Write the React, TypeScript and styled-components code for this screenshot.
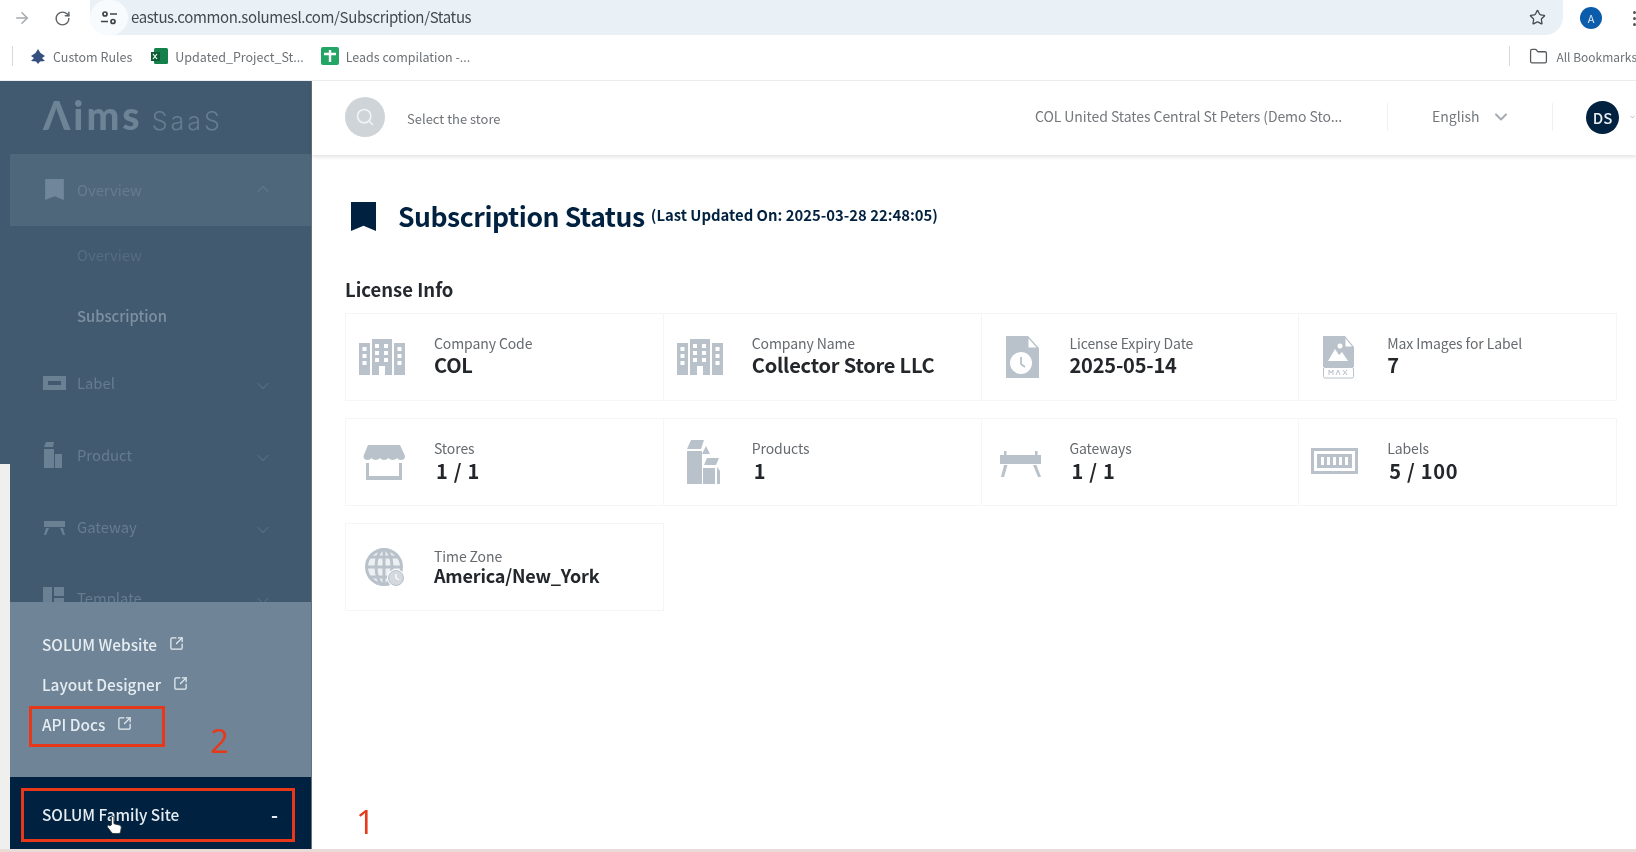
import React from "react";
import styled, { createGlobalStyle } from "styled-components";
import {
  ArrowRight,
  ChevronDown,
  ChevronUp,
  Folder,
  RotateCw,
  Search,
  SquareArrowOutUpRight,
  Star,
} from "lucide-react";

const FONT = `"Noto Sans CJK KR", "Noto Sans", sans-serif`;
const ICON = "#b9c2ca";

const Global = createGlobalStyle`
  html, body { margin: 0; padding: 0; background: #fff; overflow: hidden; }
  * { box-sizing: border-box; }
  #root { width: 1636px; height: 852px; }
`;

const Page = styled.div`
  width: 1636px;
  height: 852px;
  display: flex;
  flex-direction: column;
  overflow: hidden;
  font-family: ${FONT};
  background: #fff;
  border-bottom: 3px solid #e9dcd8;
  filter: blur(0.35px);
`;

const ChromeBar = styled.div`
  height: 36px;
  flex: none;
  display: flex;
  align-items: center;
  color: #6b7177;
`;

const NavButtons = styled.div`
  width: 90px;
  flex: none;
  display: flex;
  align-items: center;
  gap: 23px;
  padding-left: 13px;
`;

const Omnibox = styled.div`
  width: 1473px;
  height: 35px;
  flex: none;
  align-self: flex-start;
  display: flex;
  align-items: center;
  background: #e9f1f7;
  border-radius: 0 0 18px 18px;
  padding-right: 17px;
`;

const SiteChip = styled.div`
  width: 38px;
  height: 35px;
  flex: none;
  display: flex;
  align-items: center;
  justify-content: center;
  background: #f8fbfd;
  border-radius: 18px;
  margin-right: 3px;
`;

const UrlText = styled.span`
  flex: 1;
  font-size: 15px;
  letter-spacing: -0.37px;
  color: #44494e;
  padding-bottom: 2px;
`;

const ProfileDot = styled.div`
  width: 22px;
  height: 22px;
  margin-left: 17px;
  border-radius: 50%;
  background: #0b5cab;
  color: #dfeaf5;
  font-size: 11px;
  display: flex;
  align-items: center;
  justify-content: center;
  flex: none;
`;

const KebabDots = styled.div`
  margin-left: 31px;
  display: flex;
  flex-direction: column;
  gap: 3px;
  flex: none;
  span {
    width: 3px;
    height: 3px;
    border-radius: 50%;
    background: #555;
  }
`;

const BookmarkBar = styled.div`
  height: 45px;
  flex: none;
  display: flex;
  align-items: center;
  padding: 0 0 4px 12px;
  border-bottom: 1px solid #eceef0;
  font-size: 12.5px;
  color: #6d7277;
`;

const BarDivider = styled.div`
  width: 1px;
  height: 20px;
  background: #d5d9dc;
  flex: none;
`;

const BookmarkItem = styled.div<{ $left: number; $gap: number; $right?: number; $size?: number }>`
  display: flex;
  align-items: center;
  gap: ${(p) => p.$gap}px;
  margin-left: ${(p) => p.$left}px;
  margin-right: ${(p) => p.$right ?? 0}px;
  font-size: ${(p) => p.$size ?? 12.5}px;
  white-space: nowrap;
  flex: none;
`;

const BookmarkSpacer = styled.div`
  flex: 1;
`;

const Body = styled.div`
  flex: 1;
  display: flex;
  min-height: 0;
`;

const Sidebar = styled.aside`
  position: relative;
  width: 312px;
  flex: none;
  display: flex;
  flex-direction: column;
  background: #415a70;
  border-right: 1px solid #66727c;
`;

const WindowGutter = styled.div`
  position: absolute;
  left: 0;
  top: 383px;
  bottom: 0;
  width: 10px;
  background: #efefed;
`;

const Nav = styled.nav`
  height: 521px;
  flex: none;
  overflow: hidden;
`;

const Brand = styled.div`
  height: 73px;
  display: flex;
  align-items: baseline;
  gap: 9px;
  padding: 10px 0 0 43px;
  color: #6d8396;
`;

const BrandMark = styled.span`
  font-family: "Lato", sans-serif;
  font-size: 39px;
  font-weight: 900;
  line-height: 48px;
  letter-spacing: 3px;
`;

const BrandSuffix = styled.span`
  font-family: "Inter", sans-serif;
  font-size: 25px;
  font-weight: 300;
  letter-spacing: 3px;
  color: #667d90;
`;

const MenuRow = styled.div<{ $active?: boolean; $h: number }>`
  height: ${(p) => p.$h}px;
  display: flex;
  align-items: center;
  margin-left: ${(p) => (p.$active ? 10 : 0)}px;
  padding-left: ${(p) => (p.$active ? 35 : 43)}px;
  padding-bottom: 2px;
  background: ${(p) => (p.$active ? "#4f677b" : "transparent")};
  color: #667c8f;
  font-size: 14.8px;
`;

const MenuIcon = styled.span<{ $active?: boolean }>`
  width: ${(p) => (p.$active ? 32 : 34)}px;
  flex: none;
  display: flex;
  align-items: center;
`;

const MenuLabel = styled.span`
  flex: 1;
`;

const MenuChevron = styled.span<{ $drop: number; $active?: boolean }>`
  width: 58px;
  flex: none;
  color: ${(p) => (p.$active ? "#5f7689" : "#546c80")};
  display: flex;
  margin-top: ${(p) => p.$drop}px;
`;

const SubRow = styled.div<{ $on?: boolean }>`
  height: 61px;
  display: flex;
  align-items: center;
  padding: 0 0 4px 77px;
  font-size: 14.8px;
  font-weight: ${(p) => (p.$on ? 500 : 400)};
  color: ${(p) => (p.$on ? "#7d91a2" : "#566d81")};
`;

const LinksPanel = styled.div`
  position: relative;
  z-index: 1;
  height: 175px;
  flex: none;
  margin-left: 10px;
  padding: 22px 0 0 32px;
  background: #6f8497;
  display: flex;
  flex-direction: column;
`;

const LinkRow = styled.div`
  height: 40px;
  display: flex;
  align-items: center;
  gap: 12px;
  font-size: 15.4px;
  font-weight: 500;
  color: #e6edf2;
  svg {
    margin-top: -1px;
  }
`;

const FamilyBar = styled.div`
  position: relative;
  z-index: 1;
  flex: 1;
  margin-left: 10px;
  display: flex;
  align-items: center;
  justify-content: space-between;
  padding: 1px 33px 0 32px;
  background: #00213f;
  color: #e6edf2;
  font-size: 15.4px;
  font-weight: 500;
`;

const FamilyToggle = styled.span`
  font-size: 19px;
  font-weight: 700;
`;

const Callout = styled.div<{ $l: number; $t: number; $w: number; $h: number }>`
  position: absolute;
  left: ${(p) => p.$l}px;
  top: ${(p) => p.$t}px;
  width: ${(p) => p.$w}px;
  height: ${(p) => p.$h}px;
  border: 3px solid #e8381a;
  z-index: 2;
`;

const CalloutNumber = styled.span<{ $l: number; $t: number }>`
  position: absolute;
  left: ${(p) => p.$l}px;
  top: ${(p) => p.$t}px;
  font-family: "Open Sans", sans-serif;
  font-size: 33px;
  font-weight: 500;
  line-height: 40px;
  color: #e8381a;
  z-index: 2;
`;

const HandCursor = styled.svg`
  position: absolute;
  left: 106px;
  top: 734px;
  z-index: 3;
`;

const Main = styled.main`
  position: relative;
  flex: 1;
  min-width: 0;
  display: flex;
  flex-direction: column;
`;

const TopBar = styled.header`
  height: 74px;
  flex: none;
  display: flex;
  align-items: center;
  padding: 0 0 2px 33px;
  box-shadow: 0 2px 4px rgba(0, 0, 0, 0.12);
`;

const SearchCircle = styled.div`
  width: 40px;
  height: 40px;
  flex: none;
  border-radius: 50%;
  background: #cfd4d8;
  color: #f1f3f4;
  display: flex;
  align-items: center;
  justify-content: center;
`;

const StorePrompt = styled.span`
  margin-left: 22px;
  font-size: 13px;
  color: #6e7276;
  flex: 1;
  padding-top: 3px;
`;

const StoreName = styled.span`
  width: 352px;
  flex: none;
  font-size: 14px;
  letter-spacing: -0.07px;
  color: #74787c;
  white-space: nowrap;
  padding-bottom: 2px;
`;

const TopDivider = styled.div`
  width: 1px;
  height: 28px;
  background: #f0f1f2;
  flex: none;
`;

const LanguagePicker = styled.div`
  width: 164px;
  flex: none;
  display: flex;
  align-items: center;
  gap: 11px;
  padding-left: 44px;
  font-size: 14px;
  color: #74787c;
  span {
    padding-bottom: 2px;
  }
`;

const UserArea = styled.div`
  flex: none;
  width: 83px;
  display: flex;
  align-items: center;
  gap: 10px;
  padding-left: 33px;
  color: #8e9499;
`;

const Avatar = styled.div`
  width: 33px;
  height: 33px;
  flex: none;
  border-radius: 50%;
  background: #00213f;
  color: #e9eef2;
  font-size: 15px;
  font-weight: 500;
  display: flex;
  align-items: center;
  justify-content: center;
`;

const Content = styled.div`
  flex: 1;
  padding: 45px 20px 0 33px;
`;

const TitleRow = styled.div`
  display: flex;
  align-items: center;
  height: 30px;
`;

const TitleMark = styled.svg`
  margin: 2px 22px 0 6px;
  flex: none;
`;

const Title = styled.h1`
  margin: 0;
  font-size: 26.5px;
  letter-spacing: -0.42px;
  font-weight: 700;
  color: #00213f;
  white-space: nowrap;
`;

const UpdatedNote = styled.span`
  margin-left: 6px;
  font-size: 14.85px;
  font-weight: 700;
  color: #00213f;
  white-space: nowrap;
  position: relative;
  top: -1px;
`;

const SectionTitle = styled.h2`
  margin: 46px 0 0;
  height: 26px;
  font-size: 18.5px;
  line-height: 26px;
  font-weight: 700;
  color: #25292d;
`;

const CardGrid = styled.div`
  margin-top: 11px;
  display: grid;
  grid-template-columns: repeat(4, 1fr);
  grid-auto-rows: 88px;
  row-gap: 17px;
`;

const Card = styled.div`
  display: flex;
  align-items: flex-start;
  border: 1px solid #f4f5f5;
  margin-right: -1px;
  padding: 13px 0 0 9px;
`;

const CardIcon = styled.svg`
  flex: none;
  margin-right: 19px;
`;

const CardText = styled.div`
  display: flex;
  flex-direction: column;
  min-width: 0;
  padding-top: 7px;
`;

const CardLabel = styled.span<{ $drop?: number }>`
  font-size: 14px;
  letter-spacing: -0.1px;
  line-height: 18px;
  color: #666a6e;
  margin-top: ${(p) => p.$drop ?? 0}px;
`;

const CardValue = styled.span<{ $shift?: number; $spaced?: boolean; $compact?: boolean }>`
  font-size: ${(p) => (p.$compact ? 18 : 20)}px;
  line-height: ${(p) => (p.$compact ? 18 : 24)}px;
  letter-spacing: ${(p) => (p.$spaced ? 0.7 : -0.2)}px;
  font-weight: 700;
  color: #23262a;
  white-space: pre;
  margin-top: ${(p) => p.$shift ?? 1}px;
  padding-left: ${(p) => (p.$spaced ? 2 : 0)}px;
`;

const Svg = ({ children }: { children: React.ReactNode }) => (
  <CardIcon width="60" height="60" viewBox="0 0 60 60" fill={ICON}>
    {children}
  </CardIcon>
);

const windowGrid = (xs: number[], ys: number[], s = 4) =>
  xs.flatMap((x) =>
    ys.map((y) => <rect key={`${x}-${y}`} x={x} y={y} width={s} height={s} fill="#fff" />)
  );

const BuildingIcon = () => (
  <Svg>
    <rect x="4" y="16" width="11" height="32" />
    <rect x="17" y="12" width="20" height="36" />
    <rect x="39" y="16" width="11" height="32" />
    {windowGrid([7.5, 42.5], [20, 27, 34])}
    {windowGrid([20, 29], [17, 24, 31])}
    <rect x="24" y="39" width="6" height="9" fill="#fff" />
  </Svg>
);

const StoreIcon = () => (
  <Svg>
    <path d="M13 13h32l5 11c0 3-2 4-4 4s-3-1-4-2c-1 1-3 2-4.500 2s-3-1-4-2c-1 1-3 2-4.500 2s-3-1-4-2c-1 1-3 2-4.500 2s-3-1-4-2c-1 1-2 2-4 2s-4-1-4-4z" />
    <path d="M11 31h3v13h30V31h3v17H11z" />
  </Svg>
);

const ProductIcon = () => (
  <Svg>
    <path d="M18 8h13l-3 9H14z" />
    <rect x="14" y="19" width="15" height="33" />
    <path d="M33 14l4 8h-8z" />
    <path d="M34 26h12l-3 7H31z" />
    <rect x="30" y="36" width="12" height="16" />
    <path d="M44 35l3 4v13h-3z" />
  </Svg>
);

const DocClockIcon = () => (
  <Svg>
    <path d="M15 9h22l11 12v30H15z" />
    <path d="M37.500 11.500l8 9h-8z" fill="#fff" />
    <circle cx="30" cy="36" r="11" fill="#fff" />
    <path d="M30 30v7l4 3" fill="none" stroke={ICON} strokeWidth="1.800" />
  </Svg>
);

const GatewayIcon = () => (
  <Svg>
    <rect x="9" y="23" width="41" height="9" />
    <rect x="13" y="19" width="2.500" height="4" />
    <rect x="44" y="19" width="2.500" height="4" />
    <path d="M13 33h3.500l-3.500 12h-3zM42 33h3.500l4.500 12h-3z" />
  </Svg>
);

const MaxImageIcon = () => (
  <Svg>
    <path d="M15 9h22l9 11v20H15z" />
    <path d="M37.500 11.500l6.500 8h-6.500z" fill="#fff" />
    <path d="M20 34l7-12 4 6 3-3 6 9z" fill="#fff" />
    <circle cx="32" cy="19" r="2.500" fill="#fff" />
    <rect x="15.500" y="40.500" width="30" height="10.500" rx="1.500" fill="#fff" stroke={ICON} />
    <path d="M21 48v-5l2 3 2-3v5M28 48l2-5 2 5M35 43l4 5M39 43l-4 5" fill="none" stroke={ICON} strokeWidth="1" />
  </Svg>
);

const LabelIcon = () => (
  <Svg>
    <path fillRule="evenodd" d="M3 16h47v26H3zM6 19v20h41V19z" />
    <path fillRule="evenodd" d="M9 22h35v14H9zM13 25v8h3v-8zM19 25v8h3v-8zM25 25v8h3v-8zM31 25v8h3v-8zM37 25v8h3v-8z" />
  </Svg>
);

const GlobeIcon = () => (
  <Svg>
    <g fill="none" stroke={ICON} strokeWidth="3">
      <circle cx="29" cy="30" r="17.500" fill={ICON} fillOpacity=".25" />
      <ellipse cx="29" cy="30" rx="8" ry="17.500" />
      <path d="M11 30h36M14 20h30M14 40h30M29 12v36" />
    </g>
    <circle cx="41" cy="41" r="9" fill="#fff" />
    <circle cx="41" cy="41" r="7.500" fill="#d3d9de" stroke={ICON} />
    <path d="M41 37v4l3 2" fill="none" stroke="#fff" strokeWidth="1.300" />
  </Svg>
);

type CardData = {
  icon: React.ReactNode;
  label: string;
  value: string;
  shift?: number;
  spaced?: boolean;
  compact?: boolean;
  drop?: number;
};

const cards: CardData[] = [
  { icon: <BuildingIcon />, label: "Company Code", value: "COL" },
  { icon: <BuildingIcon />, label: "Company Name", value: "Collector Store LLC" },
  { icon: <DocClockIcon />, label: "License Expiry Date", value: "2025-05-14" },
  { icon: <MaxImageIcon />, label: "Max Images for Label", value: "7" },
  { icon: <StoreIcon />, label: "Stores", value: "1 / 1", shift: 2, spaced: true },
  { icon: <ProductIcon />, label: "Products", value: "1", shift: 2, spaced: true },
  { icon: <GatewayIcon />, label: "Gateways", value: "1 / 1", shift: 2, spaced: true },
  { icon: <LabelIcon />, label: "Labels", value: "5 / 100", shift: 2, spaced: true },
  { icon: <GlobeIcon />, label: "Time Zone", value: "America/New_York", compact: true, drop: 3, shift: 1 },
];

const BookmarkGlyph = ({ w, h, color }: { w: number; h: number; color: string }) => (
  <svg width={w} height={h} viewBox="0 0 25 28" fill={color}>
    <path d="M0 0h25v28l-12.500-5L0 28z" />
  </svg>
);

const navIconFill = "#6a8194";

const items = [
  {
    name: "Label",
    h: 71,
    icon: (
      <svg width="23" height="14" viewBox="0 0 23 14" fill={navIconFill}>
        <path fillRule="evenodd" d="M0 0h23v14H0zM5 5v4h13V5z" />
      </svg>
    ),
  },
  {
    name: "Product",
    h: 73,
    icon: (
      <svg width="20" height="26" viewBox="0 0 20 26" fill={navIconFill}>
        <path d="M3 0h8l-1 5H1zM1 7h10v19H1zM12 12h7v14h-7z" />
      </svg>
    ),
  },
  {
    name: "Gateway",
    h: 71,
    icon: (
      <svg width="23" height="16" viewBox="0 0 23 16" fill={navIconFill}>
        <path d="M1 2h21v6H1zM3 9h3l-3 7H1zM17 9h3l2 7h-2z" />
      </svg>
    ),
  },
  {
    name: "Template",
    h: 71,
    icon: (
      <svg width="21" height="21" viewBox="0 0 21 21" fill={navIconFill}>
        <path d="M0 0h9v21H0zM11 0h10v9H11zM11 11h10v10H11z" />
      </svg>
    ),
  },
];

export default function App() {
  return (
    <Page>
      <Global />
      <ChromeBar>
        <NavButtons>
          <ArrowRight size={18} color="#a4a9ad" />
          <RotateCw size={17} color="#5d6267" />
        </NavButtons>
        <Omnibox>
          <SiteChip>
            <svg width="16" height="14" viewBox="0 0 16 14" fill="none" stroke="#3f4449" strokeWidth="1.700">
              <circle cx="4" cy="3" r="2" />
              <path d="M9 3h7M0 10.500h7" />
              <circle cx="12" cy="10.500" r="2" />
            </svg>
          </SiteChip>
          <UrlText>eastus.common.solumesl.com/Subscription/Status</UrlText>
          <Star size={17} color="#45494d" strokeWidth={1.8} />
        </Omnibox>
        <ProfileDot>A</ProfileDot>
        <KebabDots>
          <span />
          <span />
          <span />
        </KebabDots>
      </ChromeBar>

      <BookmarkBar>
        <BarDivider />
        <BookmarkItem $left={17} $gap={7}>
          <svg width="16" height="15" viewBox="0 0 16 15" fill="#35507f">
            <path d="M8 0l2.500 4L15 7l-3 2 3 3-5 .500L8 15l-2-2.500-5-.5 3-3-3-2 4.500-3z" />
          </svg>
          Custom Rules
        </BookmarkItem>
        <BookmarkItem $left={19} $gap={7}>
          <svg width="17" height="16" viewBox="0 0 17 16">
            <rect x="3" y="0" width="14" height="16" rx="1.500" fill="#14814b" />
            <rect x="0" y="4" width="9" height="9" fill="#0b5d33" />
            <path d="M2 6l4 5M6 6l-4 5" stroke="#fff" strokeWidth="1.200" />
          </svg>
          Updated_Project_St...
        </BookmarkItem>
        <BookmarkItem $left={17} $gap={7}>
          <svg width="18" height="18" viewBox="0 0 18 18">
            <rect width="18" height="18" rx="2" fill="#23a566" />
            <path d="M3 7h12M9 3v12" stroke="#fff" strokeWidth="2.400" />
          </svg>
          Leads compilation -...
        </BookmarkItem>
        <BookmarkSpacer />
        <BarDivider />
        <BookmarkItem $left={19} $gap={8} $right={-1} $size={12}>
          <Folder size={19} color="#55595d" strokeWidth={1.6} />
          All Bookmarks
        </BookmarkItem>
      </BookmarkBar>

      <Body>
        <Sidebar>
          <Nav>
            <Brand>
              <BrandMark>Λims</BrandMark>
              <BrandSuffix>SaaS</BrandSuffix>
            </Brand>
            <MenuRow $active $h={72}>
              <MenuIcon $active>
                <BookmarkGlyph w={19} h={21} color="#70879a" />
              </MenuIcon>
              <MenuLabel>Overview</MenuLabel>
              <MenuChevron $drop={-1} $active>
                <ChevronUp size={20} strokeWidth={1.4} />
              </MenuChevron>
            </MenuRow>
            <SubRow>Overview</SubRow>
            <SubRow $on>Subscription</SubRow>
            {items.map((it) => (
              <MenuRow key={it.name} $h={it.h}>
                <MenuIcon>{it.icon}</MenuIcon>
                <MenuLabel>{it.name}</MenuLabel>
                <MenuChevron $drop={6}>
                  <ChevronDown size={20} strokeWidth={1.4} />
                </MenuChevron>
              </MenuRow>
            ))}
          </Nav>
          <LinksPanel>
            {["SOLUM Website", "Layout Designer", "API Docs"].map((t) => (
              <LinkRow key={t}>
                {t}
                <SquareArrowOutUpRight size={15} strokeWidth={2} />
              </LinkRow>
            ))}
          </LinksPanel>
          <FamilyBar>
            <span>SOLUM Family Site</span>
            <FamilyToggle>-</FamilyToggle>
          </FamilyBar>
          <WindowGutter />
          <Callout $l={29} $t={625} $w={136} $h={41} />
          <Callout $l={21} $t={707} $w={274} $h={54} />
          <CalloutNumber $l={210} $t={640}>2</CalloutNumber>
          <HandCursor width="16" height="20" viewBox="0 0 24 28" fill="#fff" stroke="#22303c" strokeWidth="1.500">
            <path d="M8 14V3a2 2 0 0 1 4 0v9l8 2c2 .5 3 2 3 4l-1 6c-.5 2-2 3-4 3h-6c-2 0-3-1-4-2l-6-8c-1-2 1-4 3-2z" />
          </HandCursor>
        </Sidebar>

        <Main>
          <TopBar>
            <SearchCircle>
              <Search size={20} strokeWidth={2} />
            </SearchCircle>
            <StorePrompt>Select the store</StorePrompt>
            <StoreName>COL United States Central St Peters (Demo Sto...</StoreName>
            <TopDivider />
            <LanguagePicker>
              <span>English</span>
              <ChevronDown size={20} color="#a5abb0" strokeWidth={2.400} />
            </LanguagePicker>
            <TopDivider />
            <UserArea>
              <Avatar>DS</Avatar>
              <ChevronDown size={18} strokeWidth={2} />
            </UserArea>
          </TopBar>
          <Content>
            <TitleRow>
              <TitleMark width="25" height="29" viewBox="0 0 25 28" preserveAspectRatio="none" fill="#00213f">
                <path d="M0 0h25v28l-12.500-5L0 28z" />
              </TitleMark>
              <Title>Subscription Status</Title>
              <UpdatedNote>(Last Updated On: 2025-03-28 22:48:05)</UpdatedNote>
            </TitleRow>
            <SectionTitle>License Info</SectionTitle>
            <CardGrid>
              {cards.map((c) => (
                <Card key={c.label}>
                  {c.icon}
                  <CardText>
                    <CardLabel $drop={c.drop}>{c.label}</CardLabel>
                    <CardValue $shift={c.shift} $spaced={c.spaced} $compact={c.compact}>
                      {c.value}
                    </CardValue>
                  </CardText>
                </Card>
              ))}
            </CardGrid>
          </Content>
          <CalloutNumber $l={44} $t={721}>1</CalloutNumber>
        </Main>
      </Body>
    </Page>
  );
}
